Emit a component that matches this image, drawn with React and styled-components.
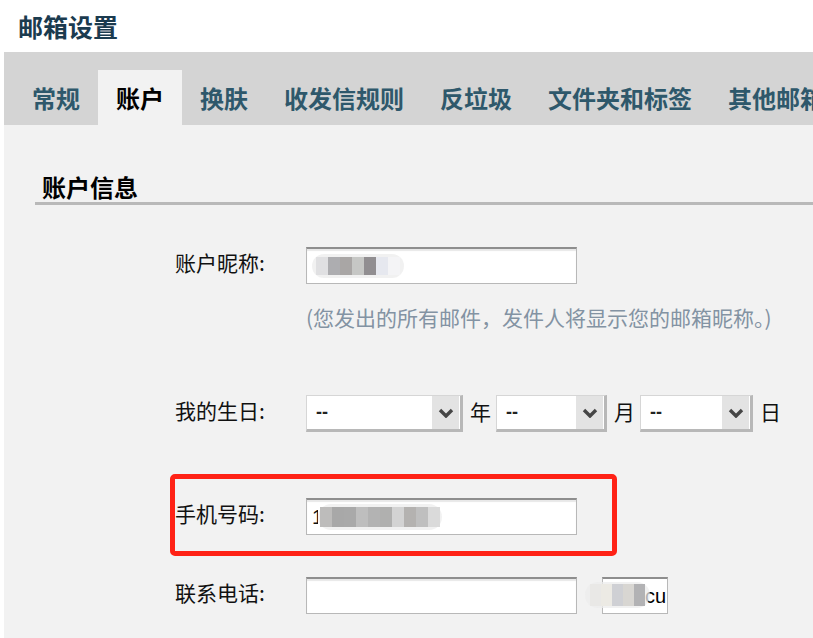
import React from "react";
import styled, { createGlobalStyle } from "styled-components";

const Global = createGlobalStyle`
  html, body { margin: 0; padding: 0; background: #fff; overflow: hidden; }
  body { font-family: "Noto Sans CJK SC", "Noto Sans", sans-serif; color: #111; }
`;

const Page = styled.div`
  width: 813px;
  height: 638px;
  overflow: hidden;
  display: flex;
  flex-direction: column;
`;

const Title = styled.h1`
  margin: 0;
  height: 52px;
  padding-left: 18px;
  display: flex;
  align-items: center;
  font-size: 25px;
  font-weight: 700;
  color: #1b3b4f;
  line-height: 1;
  padding-top: 1px;
  box-sizing: border-box;
`;

const TabBar = styled.div`
  margin-left: 4px;
  height: 73px;
  background: #d4d4d4;
  display: flex;
  align-items: flex-end;
  padding-left: 10px;
  white-space: nowrap;
  overflow: hidden;
  flex-shrink: 0;
`;

const Tab = styled.div`
  height: 55px;
  padding: 0 18px;
  display: flex;
  align-items: center;
  font-size: 24px;
  font-weight: 700;
  color: ${(p) => (p.$active ? "#000" : "#2e586b")};
  background: ${(p) => (p.$active ? "#f2f2f2" : "transparent")};
  flex-shrink: 0;
`;

const Content = styled.div`
  margin-left: 4px;
  flex: 1;
  background: #f2f2f2;
  padding: 46px 0 0 31px;
`;

const SectionHead = styled.h2`
  margin: 0;
  padding: 0 0 0 7px;
  font-size: 24px;
  font-weight: 700;
  line-height: 31px;
  border-bottom: 3px solid #b9b9b9;
  color: #000;
`;

const Form = styled.div`
  padding-left: 140px;
  display: flex;
  flex-direction: column;
`;

const Row = styled.div`
  position: relative;
  display: flex;
  align-items: center;
  height: 37px;
  margin-top: ${(p) => p.$mt}px;
`;

const Label = styled.div`
  width: 131px;
  flex-shrink: 0;
  font-size: 21px;
  color: #111;
  line-height: 1;
  padding-bottom: 6px;
`;

const InputBox = styled.div`
  position: relative;
  width: 271px;
  height: 37px;
  box-sizing: border-box;
  background: #fff;
  border: 1px solid #b8b8b8;
  border-top: 2px solid #8e8e8e;
  box-shadow: inset 0 2px 1px #e8e8e8;
  display: flex;
  align-items: center;
  padding-left: 5px;
  overflow: hidden;
  flex-shrink: 0;
`;

const Hint = styled.div`
  margin: 21px 0 0 131px;
  font-size: 21px;
  line-height: 24px;
  color: #8393a3;
  white-space: nowrap;
`;

const Mosaic = styled.div`
  display: flex;
  align-items: center;
  height: ${(p) => p.$h}px;
  padding: 0 ${(p) => p.$pad}px;
  border-radius: ${(p) => p.$h / 2}px;
  background: rgba(236, 236, 236, 0.75);
  filter: blur(0.7px);
`;

const Block = styled.div`
  width: ${(p) => p.$w}px;
  height: ${(p) => p.$bh}px;
  background: ${(p) => p.$c};
`;

const Digit = styled.span`
  font-family: "Liberation Sans", sans-serif;
  font-size: 20px;
  color: #111;
  width: 6px;
  overflow: hidden;
  flex-shrink: 0;
`;

const SelectBox = styled.div`
  width: ${(p) => p.$w}px;
  height: 37px;
  box-sizing: border-box;
  background: #fff;
  border-top: 1px solid #d6d6d6;
  border-left: 1px solid #d6d6d6;
  border-right: 3px solid #b8b8b8;
  border-bottom: 3px solid #b8b8b8;
  display: flex;
  align-items: stretch;
  justify-content: space-between;
  padding: 0 1px 0 9px;
  flex-shrink: 0;
`;

const SelectValue = styled.span`
  display: flex;
  align-items: center;
  font-family: "Liberation Sans", sans-serif;
  font-size: 18px;
  font-weight: 700;
  color: #222;
`;

const DropBtn = styled.span`
  width: 27px;
  background: #e3e3e3;
  display: flex;
  align-items: center;
  justify-content: center;
`;

const Unit = styled.span`
  font-size: 21px;
  margin: 0 5px 0 7px;
  line-height: 1;
  padding-bottom: 4px;
`;

const Annotation = styled.div`
  position: absolute;
  left: -5px;
  top: -24px;
  width: 447px;
  height: 82px;
  box-sizing: border-box;
  border: 5px solid #ff2216;
  border-radius: 5px;
  pointer-events: none;
`;

const SmallBox = styled.div`
  position: relative;
  margin-left: 25px;
  width: 66px;
  height: 37px;
  box-sizing: border-box;
  background: #fff;
  border: 1px solid #b8b8b8;
  border-top: 2px solid #8e8e8e;
  display: flex;
  align-items: center;
  justify-content: flex-end;
  padding-right: 1px;
  font-family: "Liberation Sans", sans-serif;
  font-size: 20px;
  color: #000;
  flex-shrink: 0;
`;

const Overlay = styled.div`
  position: absolute;
  left: -18px;
  top: 3px;
`;

const Chevron = () => (
  <svg width="16" height="10" viewBox="0 0 16 10">
    <polyline points="2,2 8,8 14,2" fill="none" stroke="#464646" strokeWidth="3.4" />
  </svg>
);

const Select = ({ w }) => (
  <SelectBox $w={w}>
    <SelectValue>--</SelectValue>
    <DropBtn>
      <Chevron />
    </DropBtn>
  </SelectBox>
);

const nickBlocks = ["#e0e0e2", "#adadb0", "#a9a6a5", "#c6c7c5", "#918e91", "#e6e8ef", "#f4f4f6"];
const phoneBlocks = ["#bdbcbb", "#a8a8a8", "#a9a9a9", "#bebebe", "#b3b3b3", "#b0b0af", "#d3d3d3", "#b4b2b0", "#bfbfbf", "#dadada"];
const telBlocks = ["#e9e8e6", "#eceae4", "#cfd0d4", "#d8d6d2", "#b2b2b4"];

const tabs = ["常规", "账户", "换肤", "收发信规则", "反垃圾", "文件夹和标签", "其他邮箱"];

export default function App() {
  return (
    <Page>
      <Global />
      <Title>邮箱设置</Title>
      <TabBar>
        {tabs.map((t) => (
          <Tab key={t} $active={t === "账户"}>{t}</Tab>
        ))}
      </TabBar>
      <Content>
        <SectionHead>账户信息</SectionHead>
        <Form>
          <Row $mt={42}>
            <Label>账户昵称:</Label>
            <InputBox>
              <Mosaic $h={24} $pad={4}>
                {nickBlocks.map((c, i) => (
                  <Block key={i} $w={12} $bh={18} $c={c} />
                ))}
              </Mosaic>
            </InputBox>
          </Row>
          <Hint>(您发出的所有邮件，发件人将显示您的邮箱昵称。)</Hint>
          <Row $mt={66}>
            <Label>我的生日:</Label>
            <Select w={157} />
            <Unit>年</Unit>
            <Select w={111} />
            <Unit>月</Unit>
            <Select w={113} />
            <Unit>日</Unit>
          </Row>
          <Row $mt={66}>
            <Annotation />
            <Label>手机号码:</Label>
            <InputBox>
              <Digit>1</Digit>
              <Mosaic $h={26} $pad={2}>
                {phoneBlocks.map((c, i) => (
                  <Block key={i} $w={12} $bh={20} $c={c} />
                ))}
              </Mosaic>
            </InputBox>
          </Row>
          <Row $mt={42}>
            <Label>联系电话:</Label>
            <InputBox />
            <SmallBox>
              <Overlay>
                <Mosaic $h={26} $pad={5}>
                  {telBlocks.map((c, i) => (
                    <Block key={i} $w={11} $bh={22} $c={c} />
                  ))}
                </Mosaic>
              </Overlay>
              cu
            </SmallBox>
          </Row>
        </Form>
      </Content>
    </Page>
  );
}
